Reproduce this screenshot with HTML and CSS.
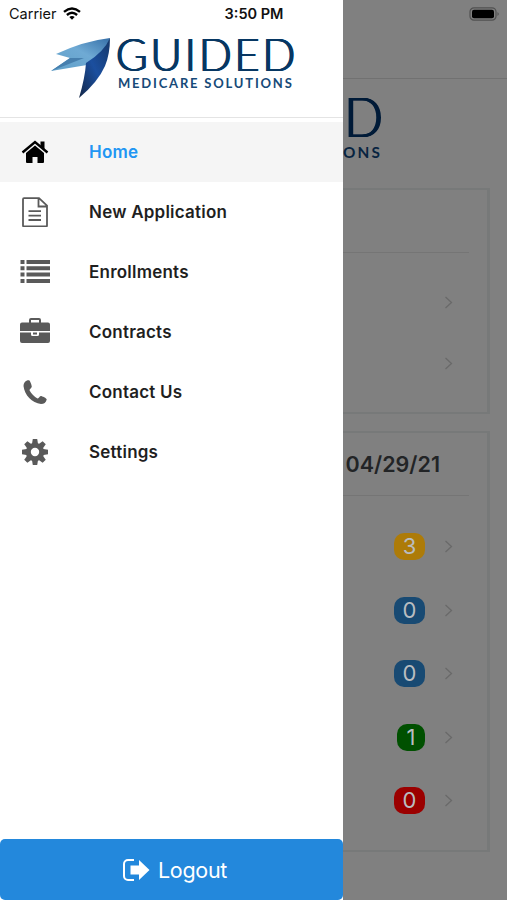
FILE: index.html
```html
<!DOCTYPE html>
<html lang="en">
<head>
<meta charset="utf-8">
<title>Guided Medicare Solutions</title>
<link rel="stylesheet" href="styles.css">
</head>
<body>
<svg class="defs" width="0" height="0" aria-hidden="true">
  <defs>
    <linearGradient id="wing" x1="0" y1="1" x2="1" y2="0"><stop offset="0" stop-color="#5f9fc8"/><stop offset=".55" stop-color="#6faad4"/><stop offset="1" stop-color="#356fa8"/></linearGradient>
    <linearGradient id="tail" x1="0" y1="1" x2="1" y2="0"><stop offset="0" stop-color="#142747"/><stop offset=".5" stop-color="#1b4f9f"/><stop offset="1" stop-color="#153768"/></linearGradient>
    <symbol id="chev" viewBox="0 0 8 13"><path d="M1 1l6 5.500-6 5.500" fill="none" stroke="currentColor" stroke-width="1.300"/></symbol>
  </defs>
</svg>
<div class="screen">
  <main class="page">
    <header class="page-bar"></header>
    <div class="page-logo">
      <div class="wordmark"><div class="name">D</div><div class="tag">ONS</div></div>
    </div>
    <section class="card first">
      <div class="card-head"></div>
      <div class="row"><svg class="chev"><use href="#chev"/></svg></div>
      <div class="row"><svg class="chev"><use href="#chev"/></svg></div>
    </section>
    <section class="card second">
      <div class="card-head"><h2>04/29/21</h2></div>
      <div class="row"><span class="badge yellow">3</span><svg class="chev"><use href="#chev"/></svg></div>
      <div class="row"><span class="badge blue">0</span><svg class="chev"><use href="#chev"/></svg></div>
      <div class="row"><span class="badge blue">0</span><svg class="chev"><use href="#chev"/></svg></div>
      <div class="row"><span class="badge green">1</span><svg class="chev"><use href="#chev"/></svg></div>
      <div class="row"><span class="badge red">0</span><svg class="chev"><use href="#chev"/></svg></div>
    </section>
  </main>

  <aside class="drawer">
    <div class="brand">
      <svg class="logo" viewBox="0 0 62 70">
        <path d="M60 6Q34 9 6 22L20 26 1 39 37 33Q54 25 60 6Z" fill="url(#wing)"/>
        <path d="M6 22L20 26 34 26 1 39 20 26Z" fill="#467fae"/>
        <path d="M60 6Q54 20 36 31Q35 46 29 66Q48 50 55 34Q60 22 60 6Z" fill="url(#tail)"/>
      </svg>
      <div class="wordmark"><div class="name">GUIDED</div><div class="tag">MEDICARE SOLUTIONS</div></div>
    </div>
    <nav class="menu">
      <a class="item active"><svg viewBox="0 0 30 30"><path d="M2.500 15.500L15 5 27.500 15.500" fill="none" stroke="currentColor" stroke-width="2.400"/><path d="M20.500 4.500h4v8.500l-4-3.500zM6 16L15 8.500l9 7.500V25a1 1 0 0 1-1 1h-5.500v-6h-5v6H7a1 1 0 0 1-1-1z" fill="currentColor"/></svg><span>Home</span></a>
      <a class="item"><svg viewBox="0 0 30 30"><g fill="none" stroke="currentColor" stroke-width="1.800"><path d="M4 1.200h15l8 7.500v19.800a1 1 0 0 1-1 1H4a1 1 0 0 1-1-1V2.200a1 1 0 0 1 1-1zM18.500 1.500v8H27M8.500 14.200h12.500M8.500 18.600h12.500M8.500 23h12.500"/></g></svg><span>New Application</span></a>
      <a class="item"><svg viewBox="0 0 30 30"><path d="M.5 3h4v4h-4zM6.500 3H30v4H6.500zM.5 9.300h4v4h-4zM6.500 9.300H30v4H6.500zM.5 15.600h4v4h-4zM6.500 15.600H30v4H6.500zM.5 21.900h4v4h-4zM6.500 21.900H30v4H6.500z" fill="currentColor"/></svg><span>Enrollments</span></a>
      <a class="item"><svg viewBox="0 0 30 30"><path d="M9 5.500V3A2 2 0 0 1 11 1h8a2 2 0 0 1 2 2V5.500h7a2 2 0 0 1 2 2v6.500H0V7.500a2 2 0 0 1 2-2zM11 5.500h8V3h-8zM0 15.500h11v2a1.500 1.500 0 0 0 1.500 1.500h5A1.500 1.500 0 0 0 19 17.500v-2h11v8.500a2 2 0 0 1-2 2H2a2 2 0 0 1-2-2zM13 15.500h4v2h-4z" fill="currentColor" fill-rule="evenodd"/></svg><span>Contracts</span></a>
      <a class="item"><svg viewBox="0 0 30 30"><path d="M7 3.500C5 4.500 3.500 6 3.500 9C4.500 18 12 26 21 27C24 27 26 25.500 26.700 22.500C26.800 21.300 22 19 20.800 19C19.500 19.500 18.500 21.500 17.500 21.500C14.500 20 11.200 16.500 9.500 13.200C9.500 12 11.800 11 11.800 9.500C11.800 8.500 10 3.300 9 3.300C8.500 3.200 7.600 3.300 7 3.500Z" fill="currentColor"/></svg><span>Contact Us</span></a>
      <a class="item"><svg viewBox="0 0 30 30"><g fill="currentColor"><path id="tooth" d="M12.800 2h4.400l1 6h-6.400z"/><use href="#tooth" transform="rotate(45 15 15)"/><use href="#tooth" transform="rotate(90 15 15)"/><use href="#tooth" transform="rotate(135 15 15)"/><use href="#tooth" transform="rotate(180 15 15)"/><use href="#tooth" transform="rotate(225 15 15)"/><use href="#tooth" transform="rotate(270 15 15)"/><use href="#tooth" transform="rotate(315 15 15)"/></g><circle cx="15" cy="15" r="6.700" fill="none" stroke="currentColor" stroke-width="5"/></svg><span>Settings</span></a>
    </nav>
    <button class="logout"><svg viewBox="0 0 28 24"><path d="M12 2H6a4 4 0 0 0-4 4v12a4 4 0 0 0 4 4h6" fill="none" stroke="currentColor" stroke-width="2"/><path d="M8.500 7.500h8.500V2L27.500 12 17 22V16.500H8.500z" fill="currentColor"/></svg><span>Logout</span></button>
  </aside>

  <div class="status">
    <span class="carrier">Carrier</span>
    <svg class="wifi" viewBox="0 0 18 13"><g fill="none" stroke="#000" stroke-width="2.400"><path d="M1 4.800Q9-2 17 4.800M3.900 8Q9 3.600 14.100 8"/></g><path d="M6.300 10Q9 7.900 11.700 10L9 12.800z"/></svg>
    <span class="time">3:50 PM</span>
    <svg class="battery" viewBox="0 0 31 14"><rect x="1" y=".8" width="26" height="12.400" rx="4" fill="none" stroke="#505050" stroke-width="1.200"/><rect x="3" y="2.800" width="22" height="8.400" rx="2"/><path d="M28.500 5Q31 7 28.500 9z" fill="#505050"/></svg>
  </div>
</div>
</body>
</html>
```
FILE: styles.css
```css
* { box-sizing: border-box; }
body { margin: 0; font-family: Inter, "Liberation Sans", sans-serif; }
.defs { position: absolute; }
.screen { position: relative; width: 507px; height: 900px; overflow: hidden; background: #808080; }

.page { display: flex; flex-direction: column; height: 900px; }
.page-bar { height: 79px; flex: none; border-bottom: 1px solid #717171; }
.page-logo { width: 382px; height: 93px; padding-top: 16px; flex: none; display: flex; justify-content: flex-end; }
.page-logo .wordmark { width: 50px; display: flex; flex-direction: column; align-items: flex-end; transform: scale(1.18); transform-origin: right top; }
.page-logo .name { color: #001b38; letter-spacing: 0; transform-origin: right top; }
.page-logo .tag { color: #082440; }
.card { width: 472px; margin-left: 18px; padding: 0 18px 0 17px; flex: none; border: 2px solid #777979; border-right-width: 3px; }
.first { height: 226px; margin-top: 16px; }
.second { height: 421px; margin-top: 17px; }
.card-head { height: 63px; display: flex; align-items: center; justify-content: flex-end; border-bottom: 1px solid #757575; }
.card-head h2 { margin: 0 29px 0 0; color: #222426; font-size: 21.500px; line-height: 28px; font-weight: 600; }
.row { display: flex; align-items: center; justify-content: flex-end; gap: 19px; height: 63.500px; padding-right: 16px; }
.first .row { height: 61px; }
.first .card-head + .row { margin-top: 19px; }
.second .card-head + .row { margin-top: 19px; }
.chev { width: 9px; height: 13px; color: #696969; }
.badge { width: 31px; height: 27px; border-radius: 10px; color: #b9bdc0; font-size: 22px; line-height: 27px; text-align: center; }
.yellow { background: #ad7b08; }
.blue { background: #184a73; }
.green { width: 28px; background: #005000; }
.red { background: #9b0000; }

.drawer { position: absolute; left: 0; top: 0; width: 343px; height: 900px; display: flex; flex-direction: column; background: #fff; }
.brand { height: 118px; padding: 32px 0 0 50px; display: flex; border-bottom: 1px solid #e4e4e4; }
.logo { width: 62px; height: 70px; flex: none; }
.brand .wordmark { margin: 3px 0 0 3px; }
.name { height: 37px; line-height: 37px; font-family: Lato, sans-serif; font-weight: 300; font-size: 46px; letter-spacing: 3px; color: #073763; text-shadow: .6px 0 currentColor, 1.200px 0 currentColor, 1.800px 0 currentColor; transform: scaleX(.94); transform-origin: left top; white-space: nowrap; }
.tag { margin: 3px 0 0 3px; height: 17px; font: 700 13px/17px Lato, sans-serif; letter-spacing: 1.800px; color: #174a78; white-space: nowrap; }
.menu { padding-top: 4px; }
.item { display: flex; align-items: center; gap: 39px; height: 60px; padding-left: 20px; color: #1f1f1f; font-size: 17px; letter-spacing: .22px; font-weight: 600; }
.item svg { width: 30px; height: 30px; color: #5a5a5a; }
.active { background: #f5f5f5; color: #2196f3; }
.active svg { color: #000; }
.logout { display: flex; align-items: center; justify-content: center; gap: 8px; margin-top: auto; padding: 0 0 0 6px; height: 61px; border: 0; border-radius: 5px; background: #2388dc; color: #fff; font-family: inherit; font-size: 21.500px; letter-spacing: -.3px; }
.logout svg { width: 28px; height: 24px; }

.status { position: absolute; left: 0; top: 0; width: 507px; height: 27px; padding: 0 7px 0 9px; display: flex; align-items: center; color: #111; font-size: 14.500px; }
.wifi { width: 18px; height: 13px; margin-left: 6px; }
.time { margin-left: 144px; font-weight: 600; }
.battery { width: 31px; height: 14px; margin-left: auto; }
```
